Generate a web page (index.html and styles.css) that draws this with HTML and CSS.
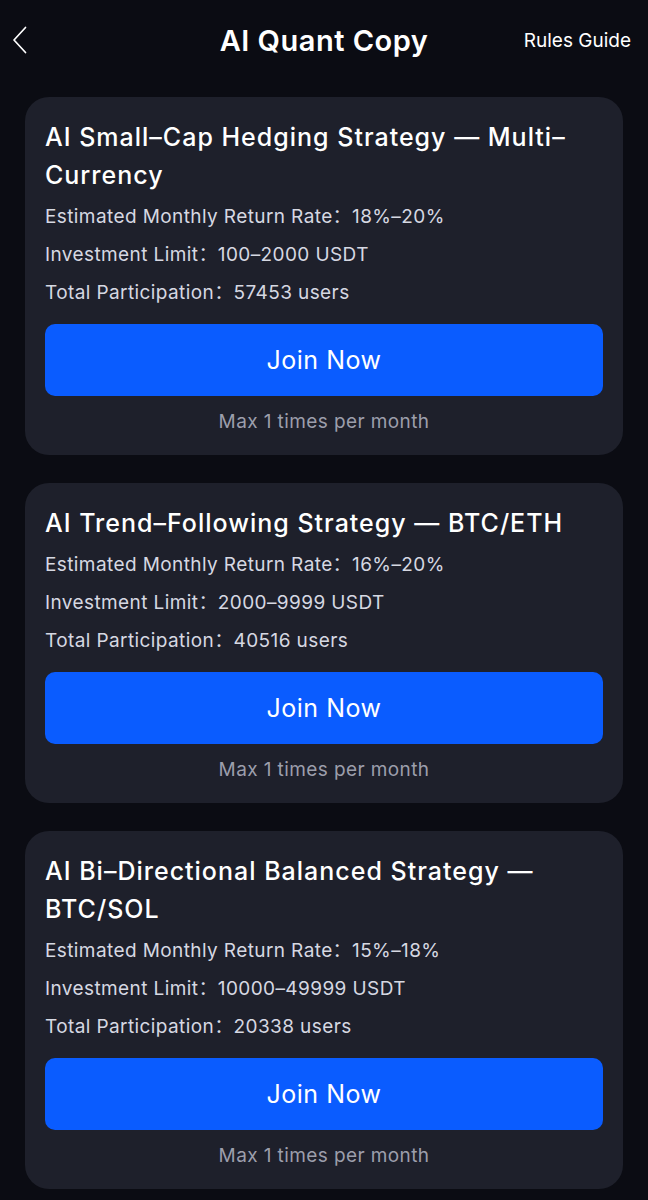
FILE: index.html
```html
<!DOCTYPE html>
<html lang="en">
<head>
    <meta charset="UTF-8">
    <meta name="viewport" content="width=device-width, initial-scale=1.0">
    <title>AI Quant Copy</title>
    <link rel="stylesheet" href="styles.css">
</head>
<body>
    <header class="topbar">
        <a class="back" href="#">
            <svg width="16" height="28" viewBox="0 0 16 28"><path d="M13.5 1.5 L2 14 L13.5 26.5" fill="none" stroke="#fff" stroke-width="1.7" stroke-linecap="round" stroke-linejoin="round"/></svg>
        </a>
        <h1>AI Quant Copy</h1>
        <a class="rules" href="#">Rules Guide</a>
    </header>

    <main class="list">
        <div class="card">
            <h2>AI Small–Cap Hedging Strategy — Multi–Currency</h2>
            <p>Estimated Monthly Return Rate：18%–20%</p>
            <p>Investment Limit：100–2000 USDT</p>
            <p>Total Participation：57453 users</p>
            <button>Join Now</button>
            <div class="note">Max 1 times per month</div>
        </div>

        <div class="card">
            <h2>AI Trend–Following Strategy — BTC/ETH</h2>
            <p>Estimated Monthly Return Rate：16%–20%</p>
            <p>Investment Limit：2000–9999 USDT</p>
            <p>Total Participation：40516 users</p>
            <button>Join Now</button>
            <div class="note">Max 1 times per month</div>
        </div>

        <div class="card">
            <h2>AI Bi–Directional Balanced Strategy — BTC/SOL</h2>
            <p>Estimated Monthly Return Rate：15%–18%</p>
            <p>Investment Limit：10000–49999 USDT</p>
            <p>Total Participation：20338 users</p>
            <button>Join Now</button>
            <div class="note">Max 1 times per month</div>
        </div>
    </main>
</body>
</html>
```

FILE: styles.css
```css
body {
    margin: 0;
    background: #0b0c13;
    color: #fff;
    font-family: Inter, "Noto Sans CJK SC", sans-serif;
}
.topbar {
    height: 80px;
    display: flex;
    align-items: center;
    justify-content: space-between;
    padding: 0 17px 0 12px;
    position: relative;
}
.back {
    display: flex;
    align-items: center;
    width: 20px;
}
.topbar h1 {
    position: absolute;
    left: 0;
    right: 0;
    text-align: center;
    margin: 0;
    font-size: 29px;
    font-weight: 600;
    letter-spacing: 0.5px;
    pointer-events: none;
}
.rules {
    color: #fff;
    text-decoration: none;
    font-size: 19px;
}
.list {
    padding: 17px 25px 0;
    display: flex;
    flex-direction: column;
    gap: 28px;
}
.card {
    background: #1e202b;
    border-radius: 24px;
    padding: 21px 20px 14px;
}
.card h2 {
    margin: 0 0 4px;
    font-size: 25px;
    font-weight: 500;
    letter-spacing: 1px;
    line-height: 38px;
}
.card p {
    margin: 0;
    font-size: 19px;
    letter-spacing: 0.4px;
    line-height: 38px;
    color: #d6d8e2;
}
.card button {
    display: block;
    width: 100%;
    height: 72px;
    margin-top: 12px;
    background: #0a5cff;
    color: #fff;
    border: none;
    border-radius: 10px;
    font-family: inherit;
    font-size: 25px;
    letter-spacing: 0.5px;
}
.note {
    margin-top: 7px;
    text-align: center;
    font-size: 19px;
    letter-spacing: 0.4px;
    line-height: 38px;
    color: #9c9eab;
}
```
